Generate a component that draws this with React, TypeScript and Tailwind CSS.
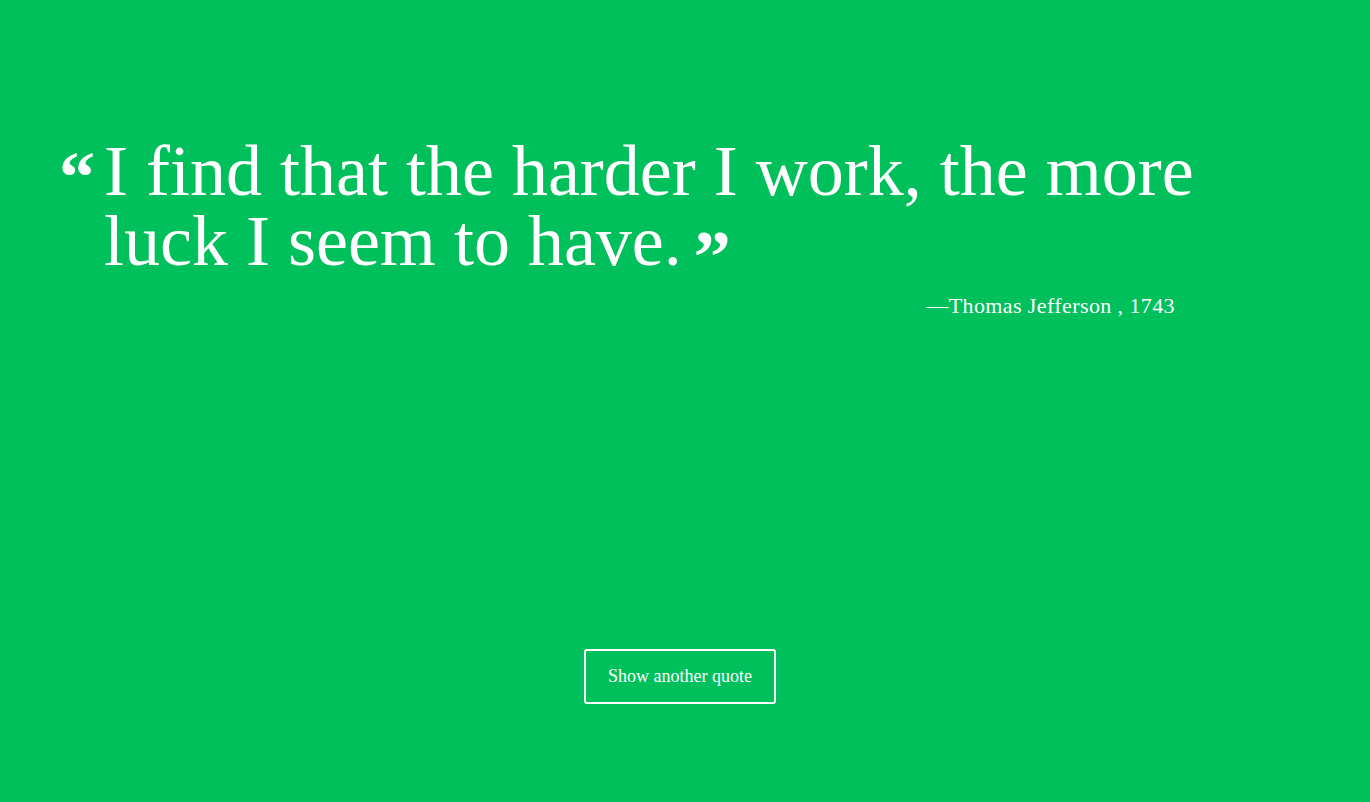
import React from 'react';

const serif = { fontFamily: '"Liberation Serif", "DejaVu Serif", serif' };

const App: React.FC = () => {
  return (
    <div className="min-h-[802px] w-full bg-[#00c05c] text-white" style={serif}>
      <div className="ml-[60px] w-[1240px] pt-[136px]">
        {/* Quote */}
        <div className="flex items-start">
          <span className="mt-[6px] w-[44px] shrink-0 -translate-x-[1px] text-[72px] font-bold leading-[70px]">&ldquo;</span>
          <p className="w-[1140px] text-[72px] leading-[70px]">
            I find that the harder I work, the more luck I seem to have.
            <span className="ml-[12px] inline-block translate-y-[26px] align-top text-[74px] font-bold leading-[50px]">&rdquo;</span>
          </p>
        </div>

        {/* Attribution */}
        <div className="mt-[13px] w-[1115px] text-right text-[22px] tracking-[0.4px]">
          &mdash;Thomas Jefferson , 1743
        </div>

        {/* Button */}
        <div className="mt-[327px] flex justify-center">
          <button className="h-[55px] w-[192px] rounded-[3px] border-2 border-white text-[18px] text-white">
            Show another quote
          </button>
        </div>
      </div>
    </div>
  );
};

export default App;
